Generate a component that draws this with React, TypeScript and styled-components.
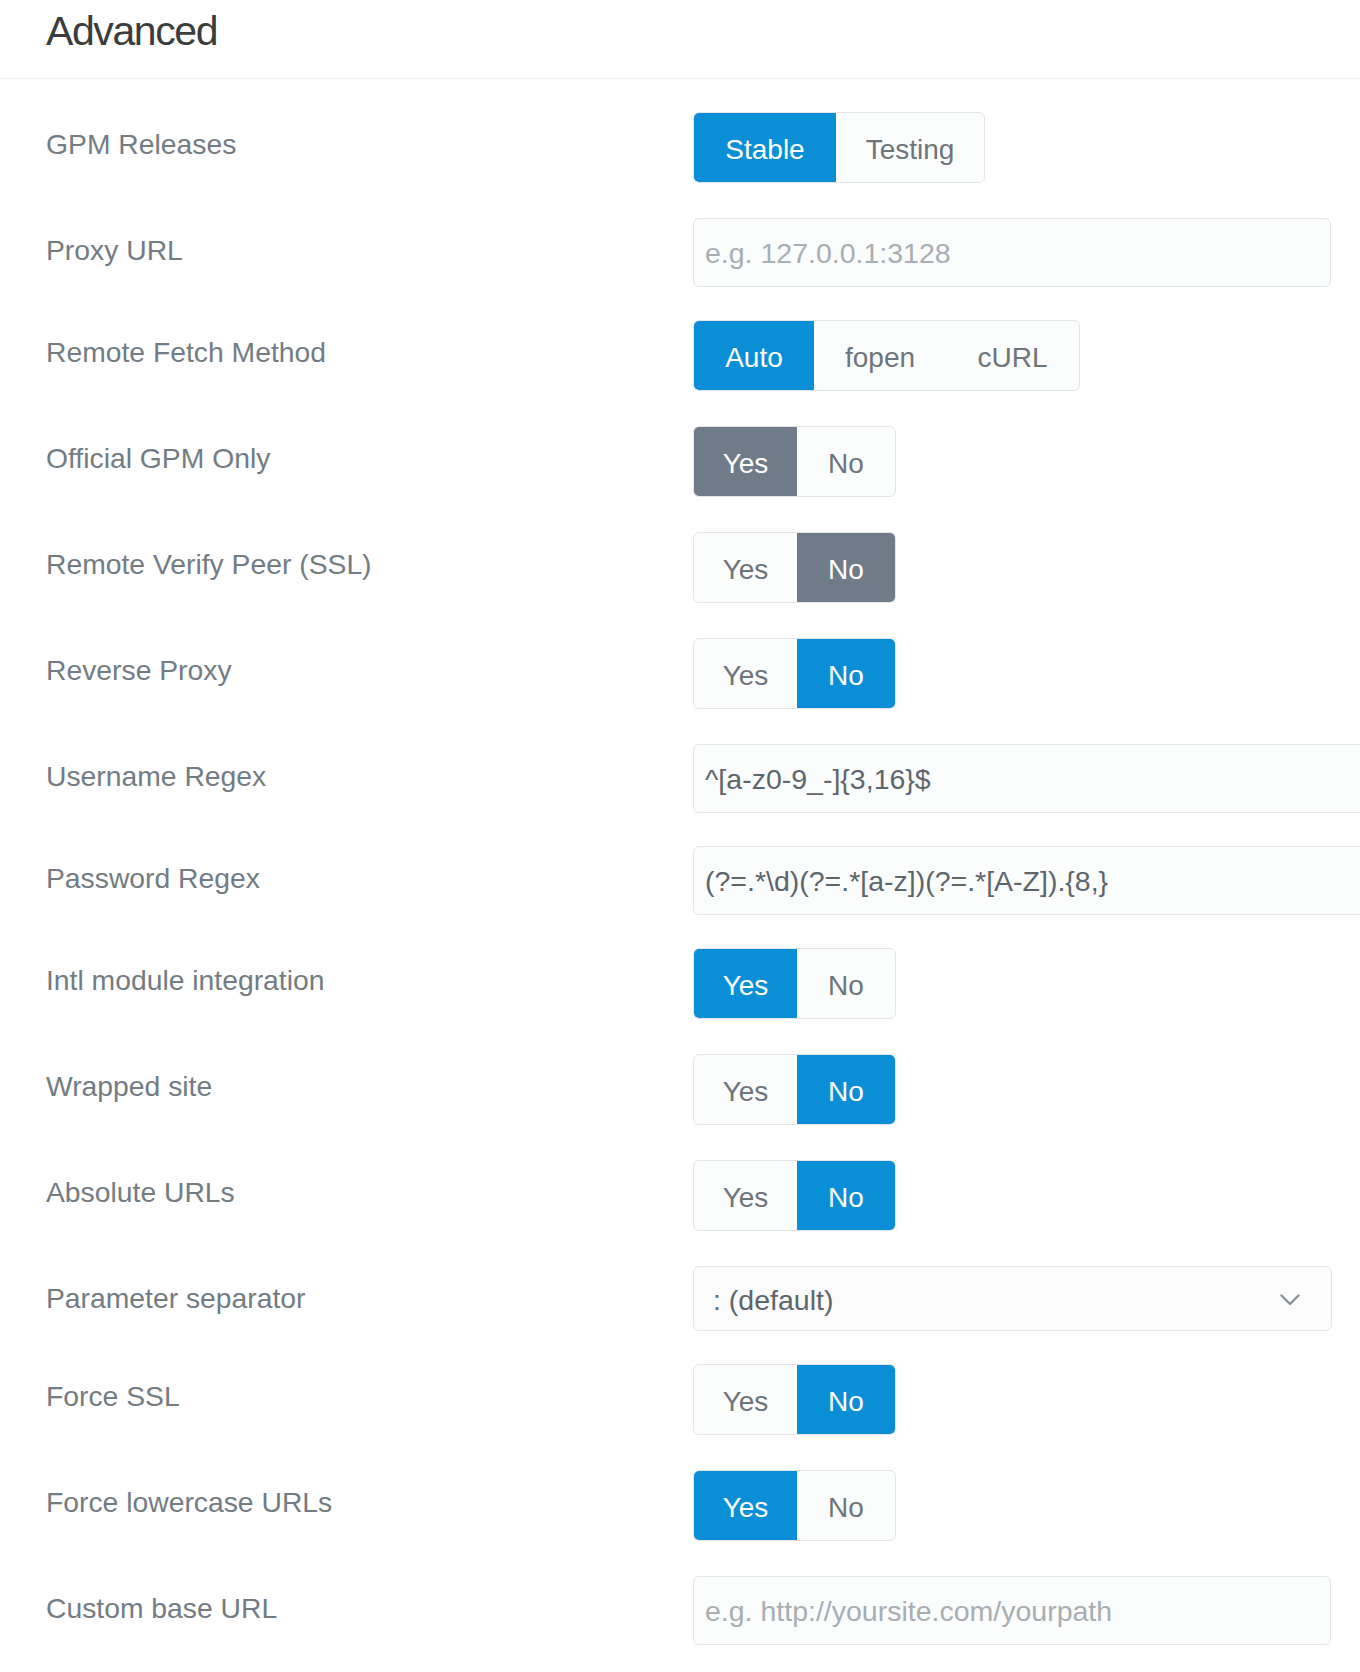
import React from "react";
import styled, { createGlobalStyle } from "styled-components";

const Global = createGlobalStyle`
  html, body {
    margin: 0;
    padding: 0;
    background: #ffffff;
    overflow-x: hidden;
  }
  body {
    font-family: "Liberation Sans", Helvetica, Arial, sans-serif;
    -webkit-font-smoothing: antialiased;
  }
  * { box-sizing: border-box; }
`;

const Page = styled.div`
  width: 1360px;
  overflow: hidden;
  background: #ffffff;
`;

const Header = styled.div`
  padding: 7px 0 23px 46px;
  border-bottom: 1px solid #f1f2f3;
`;

const Title = styled.h1`
  margin: 0;
  font-size: 41px;
  line-height: 48px;
  font-weight: 400;
  letter-spacing: -1.4px;
  color: #3b3c3d;
`;

const Form = styled.div`
  display: flex;
  flex-direction: column;
  padding: 33px 0 40px 46px;
`;

const Row = styled.div<{ $gap: number }>`
  display: flex;
  align-items: flex-start;
  margin-bottom: ${(p) => p.$gap}px;
`;

const Label = styled.div`
  width: 647px;
  flex-shrink: 0;
  padding-top: 11px;
  font-size: 28.3px;
  line-height: 42px;
  color: #737c83;
`;

const Group = styled.div`
  display: inline-flex;
  height: 71px;
  border: 1px solid #e3e5e7;
  border-radius: 6px;
  background: #fbfcfc;
  overflow: hidden;
`;

const Segment = styled.div<{ $active?: "blue" | "gray"; $w: number }>`
  width: ${(p) => p.$w}px;
  padding-top: 4px;
  display: flex;
  align-items: center;
  justify-content: center;
  font-size: 28px;
  color: ${(p) => (p.$active ? "#ffffff" : "#6d757b")};
  background: ${(p) =>
    p.$active === "blue" ? "#0a8fd7" : p.$active === "gray" ? "#6f7b89" : "transparent"};
`;

const Input = styled.div<{ $wide?: boolean; $placeholder?: boolean }>`
  width: ${(p) => (p.$wide ? "720px" : "638px")};
  height: 69px;
  flex-shrink: 0;
  border: 1px solid #e3e5e7;
  border-radius: 6px;
  background: #fbfcfc;
  padding: 2px 11px 0;
  display: flex;
  align-items: center;
  font-size: 28.5px;
  white-space: nowrap;
  color: ${(p) => (p.$placeholder ? "#a8aeb3" : "#5d666c")};
`;

const Select = styled.div`
  width: 639px;
  height: 65px;
  border: 1px solid #e3e5e7;
  border-radius: 6px;
  background: #fbfbfb;
  padding: 3px 31px 0 19px;
  display: flex;
  align-items: center;
  justify-content: space-between;
  font-size: 28.5px;
  color: #5d666c;
`;

const Chevron = () => (
  <svg width="20" height="12" viewBox="0 0 20 12" fill="none">
    <polyline
      points="1.5,1.5 10,10 18.5,1.5"
      stroke="#8b9196"
      strokeWidth="2.4"
      strokeLinecap="round"
      strokeLinejoin="round"
    />
  </svg>
);

type Tone = "blue" | "gray";
type Opt = { label: string; w: number };

const Toggle = ({
  options,
  active,
  tone = "blue",
}: {
  options: Opt[];
  active: number;
  tone?: Tone;
}) => (
  <Group>
    {options.map((o, i) => (
      <Segment key={o.label} $w={o.w} $active={i === active ? tone : undefined}>
        {o.label}
      </Segment>
    ))}
  </Group>
);

const YN: Opt[] = [
  { label: "Yes", w: 103 },
  { label: "No", w: 98 },
];
const RELEASES: Opt[] = [
  { label: "Stable", w: 142 },
  { label: "Testing", w: 148 },
];
const FETCH: Opt[] = [
  { label: "Auto", w: 120 },
  { label: "fopen", w: 132 },
  { label: "cURL", w: 133 },
];

const TOGGLE_GAP = 35;
const FIELD_GAP = 33;

export default function App() {
  return (
    <Page>
      <Global />
      <Header>
        <Title>Advanced</Title>
      </Header>
      <Form>
        <Row $gap={TOGGLE_GAP}>
          <Label>GPM Releases</Label>
          <Toggle options={RELEASES} active={0} />
        </Row>
        <Row $gap={FIELD_GAP}>
          <Label>Proxy URL</Label>
          <Input $placeholder>e.g. 127.0.0.1:3128</Input>
        </Row>
        <Row $gap={TOGGLE_GAP}>
          <Label>Remote Fetch Method</Label>
          <Toggle options={FETCH} active={0} />
        </Row>
        <Row $gap={TOGGLE_GAP}>
          <Label>Official GPM Only</Label>
          <Toggle options={YN} active={0} tone="gray" />
        </Row>
        <Row $gap={TOGGLE_GAP}>
          <Label>Remote Verify Peer (SSL)</Label>
          <Toggle options={YN} active={1} tone="gray" />
        </Row>
        <Row $gap={TOGGLE_GAP}>
          <Label>Reverse Proxy</Label>
          <Toggle options={YN} active={1} />
        </Row>
        <Row $gap={FIELD_GAP}>
          <Label>Username Regex</Label>
          <Input $wide>^[a-z0-9_-]{"{3,16}"}$</Input>
        </Row>
        <Row $gap={FIELD_GAP}>
          <Label>Password Regex</Label>
          <Input $wide>(?=.*\d)(?=.*[a-z])(?=.*[A-Z]).{"{8,}"}</Input>
        </Row>
        <Row $gap={TOGGLE_GAP}>
          <Label>Intl module integration</Label>
          <Toggle options={YN} active={0} />
        </Row>
        <Row $gap={TOGGLE_GAP}>
          <Label>Wrapped site</Label>
          <Toggle options={YN} active={1} />
        </Row>
        <Row $gap={TOGGLE_GAP}>
          <Label>Absolute URLs</Label>
          <Toggle options={YN} active={1} />
        </Row>
        <Row $gap={FIELD_GAP}>
          <Label>Parameter separator</Label>
          <Select>
            <span>: (default)</span>
            <Chevron />
          </Select>
        </Row>
        <Row $gap={TOGGLE_GAP}>
          <Label>Force SSL</Label>
          <Toggle options={YN} active={1} />
        </Row>
        <Row $gap={TOGGLE_GAP}>
          <Label>Force lowercase URLs</Label>
          <Toggle options={YN} active={0} />
        </Row>
        <Row $gap={0}>
          <Label>Custom base URL</Label>
          <Input $placeholder>e.g. http://yoursite.com/yourpath</Input>
        </Row>
      </Form>
    </Page>
  );
}
